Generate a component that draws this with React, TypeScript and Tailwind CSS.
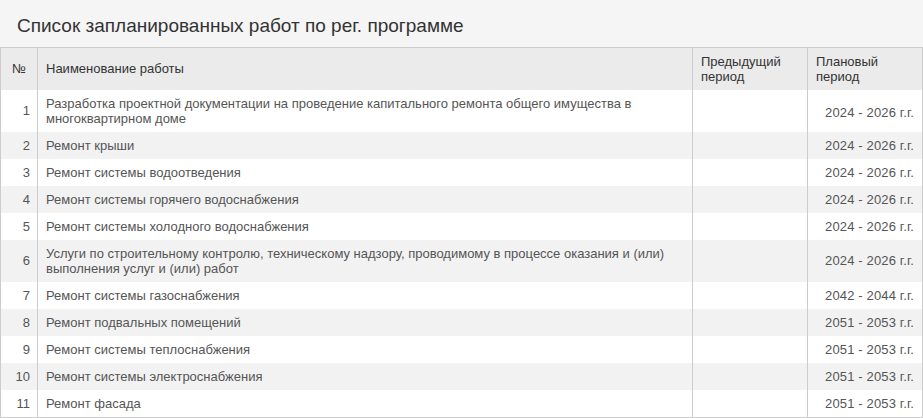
const rows: { n: number; name: string; plan: string }[] = [
  { n: 1, name: "Разработка проектной документации на проведение капитального ремонта общего имущества в многоквартирном доме", plan: "2024 - 2026 г.г." },
  { n: 2, name: "Ремонт крыши", plan: "2024 - 2026 г.г." },
  { n: 3, name: "Ремонт системы водоотведения", plan: "2024 - 2026 г.г." },
  { n: 4, name: "Ремонт системы горячего водоснабжения", plan: "2024 - 2026 г.г." },
  { n: 5, name: "Ремонт системы холодного водоснабжения", plan: "2024 - 2026 г.г." },
  { n: 6, name: "Услуги по строительному контролю, техническому надзору, проводимому в процессе оказания и (или) выполнения услуг и (или) работ", plan: "2024 - 2026 г.г." },
  { n: 7, name: "Ремонт системы газоснабжения", plan: "2042 - 2044 г.г." },
  { n: 8, name: "Ремонт подвальных помещений", plan: "2051 - 2053 г.г." },
  { n: 9, name: "Ремонт системы теплоснабжения", plan: "2051 - 2053 г.г." },
  { n: 10, name: "Ремонт системы электроснабжения", plan: "2051 - 2053 г.г." },
  { n: 11, name: "Ремонт фасада", plan: "2051 - 2053 г.г." },
];

export default function App() {
  return (
    <div className="w-[923px] h-[418px] overflow-hidden bg-[#f5f5f5] font-['Liberation_Sans',Arial,sans-serif]">
      <h1 className="h-[47px] pl-[17px] pt-[15px] text-[19px] leading-[22px] text-[#333]">
        Список запланированных работ по рег. программе
      </h1>
      <table className="w-[922px] table-fixed border-collapse border border-[#cccccc] text-[13px] leading-[15px]">
        <colgroup>
          <col className="w-[37px]" />
          <col className="w-[655px]" />
          <col className="w-[115px]" />
          <col className="w-[115px]" />
        </colgroup>
        <thead>
          <tr className="h-[42px] bg-[#ebebeb] text-[#333] text-left">
            <th className="font-normal px-2 border-r border-[#cccccc] text-center">№</th>
            <th className="font-normal px-2 border-r border-[#cccccc]">Наименование работы</th>
            <th className="font-normal px-2 border-r border-[#cccccc]">Предыдущий<br />период</th>
            <th className="font-normal px-2">Плановый<br />период</th>
          </tr>
        </thead>
        <tbody className="text-[#555]">
          {rows.map((r, i) => (
            <tr key={r.n} className={i % 2 === 1 ? "bg-[#f2f2f2]" : "bg-white"}>
              <td className="py-[6px] pr-[7px] text-right border-r border-[#cccccc]">{r.n}</td>
              <td className="py-[6px] px-2 border-r border-[#cccccc]">{r.name}</td>
              <td className="py-[6px] px-2 border-r border-[#cccccc]"></td>
              <td className={"py-[6px] pr-2 text-right tracking-[0.15px] " + (i === 0 ? "pt-[10px]" : "")}>{r.plan}</td>
            </tr>
          ))}
        </tbody>
      </table>
    </div>
  );
}
